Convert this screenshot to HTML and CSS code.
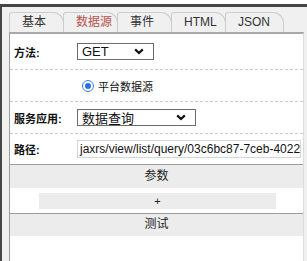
FILE: index.html
```html
<!DOCTYPE html>
<html lang="zh">
<head>
<meta charset="utf-8">
<link rel="stylesheet" href="styles.css">
</head>
<body>
<div class="topstrip"></div>
<div class="darkbar"></div>
<div class="frame">
  <div class="edge"></div>
  <div class="inner">
    <div class="tabs">
      <div class="tab">基本</div>
      <div class="tab active">数据源</div>
      <div class="tab">事件</div>
      <div class="tab">HTML</div>
      <div class="tab wide">JSON</div>
    </div>
    <div class="panel">
      <div class="row r1">
        <div class="label">方法:</div>
        <div class="select s-get"><span>GET</span><svg width="10" height="7" viewBox="0 0 10 7"><path d="M1.2 1.4 L5 5 L8.8 1.4" fill="none" stroke="#111" stroke-width="2.2"/></svg></div>
      </div>
      <div class="row r2">
        <div class="label"></div>
        <div class="radio-line"><span class="radio"><span class="dot"></span></span><span>平台数据源</span></div>
      </div>
      <div class="row r3">
        <div class="label">服务应用:</div>
        <div class="select s-app"><span>数据查询</span><svg width="10" height="7" viewBox="0 0 10 7"><path d="M1.2 1.4 L5 5 L8.8 1.4" fill="none" stroke="#111" stroke-width="2.2"/></svg></div>
      </div>
      <div class="row r4">
        <div class="label">路径:</div>
        <div class="input">jaxrs/view/list/query/03c6bc87-7ceb-4022</div>
      </div>
      <div class="bar">参数</div>
      <div class="plus-wrap"><div class="plus">+</div></div>
      <div class="bar test">测试</div>
    </div>
  </div>
</div>
</body>
</html>
```
FILE: styles.css
```css
html, body {
  margin: 0;
  padding: 0;
  background: #fff;
  font-family: "Liberation Sans", "Noto Sans CJK SC", sans-serif;
  font-size: 12px;
  color: #222;
  overflow: hidden;
}
.topstrip {
  height: 4px;
  background: #fff;
}
.darkbar {
  height: 3px;
  background: #464646;
}
.frame {
  display: flex;
  height: 254px;
}
.edge {
  width: 2px;
  background: #464646;
}
.inner {
  flex: 1;
  background: #f0f0f0;
  display: flex;
  flex-direction: column;
  padding-right: 3px;
}
.tabs {
  height: 25px;
  display: flex;
  align-items: flex-end;
  padding-left: 7px;
}
.tab {
  box-sizing: border-box;
  width: 55px;
  height: 20px;
  border: 1px solid #cdcdcd;
  border-bottom: none;
  border-radius: 3px 11px 0 0;
  padding-left: 12px;
  line-height: 19px;
  color: #333;
  background: #f0f0f0;
  margin-right: -1px;
}
.tab.wide {
  width: 59px;
}
.tab.active {
  color: #b8524e;
}
.panel {
  flex: 1;
  background: #fff;
  border-top: 2px solid #a9a9a9;
  border-left: 1px solid #9c9c9c;
  border-right: 1px solid #dcdcdc;
  margin-left: 7px;
}
.row {
  display: grid;
  grid-template-columns: 63px 1fr;
  align-items: center;
  padding-left: 4px;
  border-bottom: 1px dashed #cfcfcf;
}
.r1 { height: 35px; }
.r2 { height: 31px; }
.r3 { height: 31px; }
.r4 { height: 30px; border-bottom: none; }
.label {
  font-weight: bold;
  font-size: 11px;
  color: #111;
}
.select {
  box-sizing: border-box;
  height: 17px;
  border: 1px solid #6a6a6a;
  display: flex;
  align-items: center;
  justify-content: space-between;
  padding: 0 9px 0 4px;
  font-size: 13px;
  color: #111;
}
.s-get { width: 77px; }
.s-app { width: 119px; }
.radio-line {
  display: flex;
  align-items: center;
  gap: 4px;
  padding-left: 5px;
  font-size: 11px;
  color: #111;
}
.radio {
  box-sizing: border-box;
  width: 12px;
  height: 12px;
  border-radius: 50%;
  border: 1px solid #3d7ff0;
  display: flex;
  align-items: center;
  justify-content: center;
}
.dot {
  width: 6px;
  height: 6px;
  border-radius: 50%;
  background: #2f6fe6;
}
.input {
  box-sizing: border-box;
  width: 224px;
  height: 18px;
  border: 1px solid #cfd6dc;
  padding: 0 2px;
  line-height: 16px;
  font-size: 12px;
  color: #111;
  white-space: nowrap;
  overflow: hidden;
}
.bar {
  border-top: 1px solid #9c9c9c;
  background: #ececec;
  height: 23px;
  line-height: 23px;
  text-align: center;
  font-size: 12px;
  color: #222;
}
.bar.test {
  height: 22px;
  line-height: 21px;
}
.plus-wrap {
  padding: 5px 27px 4px 29px;
}
.plus {
  height: 16px;
  background: #ececec;
  text-align: center;
  line-height: 16px;
  font-size: 11px;
  color: #222;
}
```
